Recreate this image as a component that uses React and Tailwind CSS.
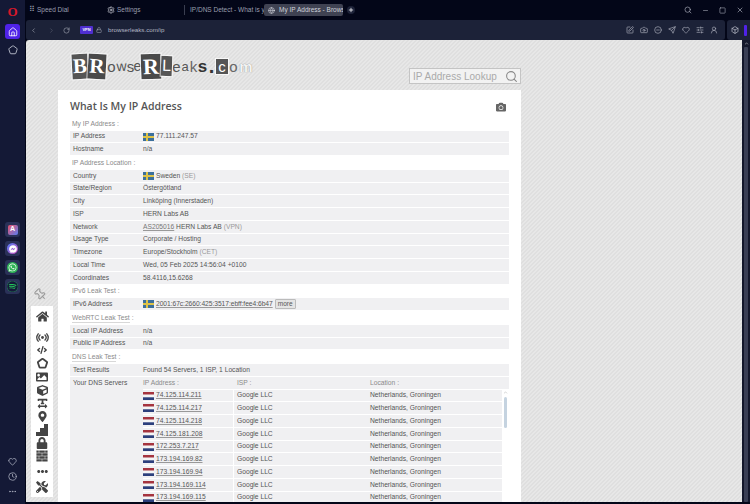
import { ChevronLeft, ChevronRight, ChevronUp, RotateCw, Lock, Search, Minus, Square, X, Plus, Home, Pentagon, Heart, Clock, Ellipsis, Settings, Globe, Camera, SquarePen, CircleMinus, Send, SlidersHorizontal, UserRound, Box, Pin } from 'lucide-react';
import { FaHome, FaCode, FaImage, FaCube, FaTextWidth, FaMapMarkerAlt, FaLock, FaEllipsisH, FaTools, FaWhatsapp, FaSpotify, FaFacebookMessenger, FaCamera } from 'react-icons/fa';
import { GiBrickWall } from 'react-icons/gi';

function SwedenFlag() {
    return (
        <svg width="11" height="8" viewBox="0 0 11 8" className="shrink-0">
            <rect width="11" height="8" fill="#3b6f9c" />
            <rect x="3" width="2" height="8" fill="#dcc248" />
            <rect y="3" width="11" height="2" fill="#dcc248" />
        </svg>
    );
}

function NetherlandsFlag() {
    return (
        <svg width="11" height="8" viewBox="0 0 11 8" className="shrink-0">
            <rect width="11" height="2.7" fill="#a5343f" />
            <rect y="2.7" width="11" height="2.6" fill="#f5f5f5" />
            <rect y="5.3" width="11" height="2.7" fill="#2c3f7c" />
        </svg>
    );
}

function Section({ children, underline }) {
    return (
        <div className="h-[13.75px] flex items-center pl-[2px] text-[#8a8a8a]">
            <span className={underline ? 'border-b border-[#d8d8d8] leading-[8px]' : ''}>{children}</span>
            <span className="ml-[2px]">:</span>
        </div>
    );
}

function Row({ label, children }) {
    return (
        <div className="h-[12.75px] flex items-center bg-[#f0f0f2] border-b border-white">
            <div className="w-[73px] pl-[3px] shrink-0">{label}</div>
            <div className="flex items-center gap-[2px] whitespace-nowrap">{children}</div>
        </div>
    );
}

const dnsServers = ['74.125.114.211', '74.125.114.217', '74.125.114.218', '74.125.181.208', '172.253.7.217', '173.194.169.82', '173.194.169.94', '173.194.169.114', '173.194.169.115'];

function DnsTable() {
    return (
        <div className="flex bg-[#f0f0f2]">
            <div className="w-[73px] shrink-0 pl-[3px] h-[12.75px] flex items-center">Your DNS Servers</div>
            <div className="flex-1">
                <div className="h-[12.75px] flex items-center border-b border-white text-[#8a8a8a]">
                    <div className="w-[94px]">IP Address :</div>
                    <div className="w-[133px]">ISP :</div>
                    <div>Location :</div>
                </div>
                <div className="relative">
                    {dnsServers.map((ip) => (
                        <div key={ip} className="h-[12.75px] flex items-center border-b border-white mr-[7px]">
                            <div className="w-[91px] flex items-center gap-[2px] border-r border-white h-full">
                                <NetherlandsFlag />
                                <span className="underline decoration-[#999]">{ip}</span>
                            </div>
                            <div className="w-[136px] pl-[3px]">Google LLC</div>
                            <div>Netherlands, Groningen</div>
                        </div>
                    ))}
                    <div className="absolute right-0 top-0 w-[7px] h-full bg-white flex flex-col items-center">
                        <ChevronUp size={5} className="text-[#999]" />
                        <div className="mt-[2px] w-[3px] h-[31px] bg-[#c5d3e0] rounded-full" />
                    </div>
                </div>
            </div>
        </div>
    );
}

const logoLetters = [
    ['B', "bg-[#555] text-white font-['Liberation_Serif',serif] font-bold text-[21px] w-[16px] h-[25px] -rotate-3"],
    ['R', "bg-[#4a4a4a] text-white font-['Liberation_Serif',serif] font-bold text-[21px] w-[18px] h-[25px] rotate-3"],
    ['o', 'ml-[1px] text-[#555] text-[15px] w-[9px]'],
    ['w', 'text-[#555] text-[14px] w-[11px] -rotate-3'],
    ['s', 'text-[#555] text-[15px] w-[7px]'],
    ['e', 'text-[#555] text-[14px] w-[7px]'],
    ['R', "bg-[#4a4a4a] text-white font-['Liberation_Serif',serif] font-bold text-[22px] w-[20px] h-[25px] -rotate-2"],
    ['L', 'bg-[#555] text-white text-[16px] w-[11px] h-[20px] rotate-2'],
    ['e', 'text-[#555] text-[15px] w-[9px]'],
    ['a', 'text-[#555] text-[13px] w-[8px]'],
    ['k', 'text-[#666] text-[15px] w-[9px]'],
    ['s', 'text-[#333] text-[17px] w-[9px] font-bold'],
    ['.', 'text-[#333] text-[20px] w-[9px] font-bold'],
    ['c', 'bg-[#555] text-white text-[15px] w-[12px] h-[15px]'],
    ['o', 'text-[#666] text-[15px] w-[11px]'],
    ['m', 'text-[#f4f4f4] text-[15px] w-[14px] font-bold [text-shadow:0_0_1px_#777]'],
];

function Logo() {
    return (
        <div className="flex items-center h-[32px] mt-[10px] ml-[14px] font-['Liberation_Sans',sans-serif]">
            {logoLetters.map(([ch, cls], i) => (
                <span key={i} className={`flex items-center justify-center leading-none shrink-0 ${i < 2 || i === 6 || i === 7 || i === 13 ? 'outline outline-1 outline-white/70' : ''} ${cls}`}>{ch}</span>
            ))}
        </div>
    );
}

function ToolPanel() {
    const cls = 'text-[#444]';
    return (
        <div className="absolute left-[5px] top-[266px] w-[22px] h-[191px] bg-white flex flex-col items-center text-[#444]">
            <FaHome size={13} className={`mt-[4px] ${cls}`} />
            <svg width="13" height="9" viewBox="0 0 13 9" fill="none" stroke="#444" strokeWidth="1.3" strokeLinecap="round" className="mt-[10px]">
                <circle cx="6.5" cy="4.5" r="1.4" fill="#444" stroke="none" />
                <path d="M4 2a3.6 3.6 0 0 0 0 5M9 2a3.6 3.6 0 0 1 0 5M2.2 0.8a6 6 0 0 0 0 7.4M10.8 0.8a6 6 0 0 1 0 7.4" />
            </svg>
            <FaCode size={10} className={`mt-[3px] ${cls}`} />
            <Pentagon size={11} strokeWidth={4} className={`mt-[3px] ${cls}`} />
            <FaImage size={12} className={`mt-[2px] ${cls}`} />
            <FaCube size={11} className={`mt-[2px] ${cls}`} />
            <FaTextWidth size={11} className={`mt-[2px] ${cls}`} />
            <FaMapMarkerAlt size={11} className={`mt-[2px] ${cls}`} />
            <svg width="12" height="12" viewBox="0 0 12 12" className="mt-[2px]" fill="#444">
                <path d="M0 12V8h4V4h4V0h4v12z" />
            </svg>
            <FaLock size={12} className={`mt-[1px] ${cls}`} />
            <GiBrickWall size={12} className={`mt-[1px] ${cls}`} />
            <FaEllipsisH size={11} className={`mt-[4px] ${cls}`} />
            <FaTools size={12} className={`mt-[4px] ${cls}`} />
        </div>
    );
}

function SideApp({ children, className }) {
    return (
        <div className="w-[15px] h-[15px] rounded-[3px] bg-[#2a3158] flex items-center justify-center">
            <div className={`w-[11px] h-[11px] rounded-full flex items-center justify-center ${className}`}>{children}</div>
        </div>
    );
}

export default function App() {
    return (
        <div className="w-[750px] h-[504px] overflow-hidden flex bg-[#030618] font-['Liberation_Sans',sans-serif]">
            {/* Opera sidebar */}
            <div className="w-[25px] h-full bg-[#141936] flex flex-col items-center shrink-0">
                <span className="mt-[4px] h-[16px] flex items-center text-[#d7182a] text-[13px] font-bold font-['Liberation_Serif',serif]">O</span>
                <div className="mt-[4px] w-[15px] h-[15px] rounded-[3px] bg-[#4f22e8] flex items-center justify-center">
                    <Home size={10} className="text-white" />
                </div>
                <Pentagon size={10} className="mt-[6px] text-[#cdd0dc]" />
                <div className="mt-[167px] flex flex-col gap-[4px]">
                    <div className="w-[15px] h-[15px] rounded-[3px] bg-[#2a3158] flex items-center justify-center">
                        <div className="w-[10px] h-[10px] rounded-[2px] bg-[linear-gradient(135deg,#e9536a,#5a7df0)] flex items-center justify-center text-white text-[7px] font-bold">A</div>
                    </div>
                    <SideApp className="bg-[linear-gradient(135deg,#4f7df5,#d04fc0)]"><FaFacebookMessenger size={8} className="text-white" /></SideApp>
                    <SideApp className="bg-[#2fb457]"><FaWhatsapp size={9} className="text-white" /></SideApp>
                    <SideApp className="bg-[#24c25a]"><FaSpotify size={11} className="text-[#15193a]" /></SideApp>
                </div>
                <div className="mt-auto mb-[8px] flex flex-col items-center gap-[6px] text-[#aeb2c2]">
                    <Heart size={9} />
                    <Clock size={9} />
                    <Ellipsis size={9} />
                </div>
            </div>

            <div className="flex-1 min-w-0 flex flex-col pl-[1px]">
                {/* Tab strip */}
                <div className="h-[20px] flex items-center text-[6.5px] text-[#9a9eae] shrink-0">
                    <div className="w-[78px] pl-[3px] flex items-center gap-[2px]">
                        <span className="text-[8px] leading-none">⠿</span>
                        <span>Speed Dial</span>
                    </div>
                    <div className="w-[80px] pl-[3px] flex items-center gap-[2px]">
                        <Settings size={8} className="text-[#d5d7e0]" />
                        <span>Settings</span>
                    </div>
                    <div className="w-[80px] h-[10px] border-l border-[#3a3e50] pl-[3px] flex items-center gap-[2px] overflow-hidden whitespace-nowrap">
                        <Globe size={6} />
                        <span>IP/DNS Detect - What is y</span>
                    </div>
                    <div className="w-[79px] h-[12px] rounded-[2px] bg-[#3f4252] pl-[4px] flex items-center gap-[4px] overflow-hidden whitespace-nowrap text-[#d0d2da]">
                        <Globe size={7} className="shrink-0" />
                        <span>My IP Address - Browserl</span>
                    </div>
                    <div className="ml-[4px] w-[8px] h-[8px] rounded-full bg-[#1d2238] flex items-center justify-center">
                        <Plus size={6} strokeWidth={3} className="text-white" />
                    </div>
                    <div className="ml-auto flex items-center gap-[10px] pr-[6px] text-[#a9acb9]">
                        <Search size={8} />
                        <Minus size={7} />
                        <Square size={7} />
                        <X size={8} />
                    </div>
                </div>

                {/* Address bar */}
                <div className="h-[20px] flex gap-[2px] shrink-0">
                    <div className="w-[699px] bg-[#1c2238] rounded-[3px] flex items-center text-[#a9acb9]">
                        <ChevronLeft size={7} className="ml-[4px]" />
                        <ChevronRight size={7} className="ml-[11px] text-[#5a5e70]" />
                        <RotateCw size={7} className="ml-[8px]" />
                        <span className="ml-[10px] w-[13px] h-[8px] rounded-[1px] bg-[#4f2fd0] text-white text-[4px] font-bold flex items-center justify-center">VPN</span>
                        <Lock size={6} className="ml-[3px]" />
                        <span className="ml-[6px] text-[6.2px] text-[#b4b7c4]">browserleaks.com/ip</span>
                        <div className="ml-auto mr-[7px] flex items-center gap-[6px]">
                            <SquarePen size={8} />
                            <Camera size={8} />
                            <CircleMinus size={8} />
                            <Send size={8} />
                            <Heart size={8} />
                            <SlidersHorizontal size={8} />
                            <UserRound size={8} />
                        </div>
                    </div>
                    <div className="flex-1 bg-[#1c2238] rounded-l-[3px] flex items-center pl-[4px] gap-[5px]">
                        <Box size={8} className="text-[#c5c8d4]" />
                        <div className="w-[3px] h-[11px] bg-[#4f22e8] rounded-[1px]" />
                    </div>
                </div>

                {/* Page */}
                <div className="relative flex-1 min-h-0 mb-[2px] flex rounded-tl-[3px] overflow-hidden">
                    <div className="flex-1 min-w-0 overflow-hidden bg-[repeating-linear-gradient(135deg,#e7e7e7_0,#e7e7e7_1.414px,#dfdfdf_1.414px,#dfdfdf_2.828px)]">
                        <div className="ml-[32px] w-[463px]">
                            <div className="h-[50px] flex justify-between">
                                <Logo />
                                <div className="self-end mb-[6px] w-[112px] h-[16px] border border-[#c4c4c4] bg-[#f2f2f2] flex items-center justify-between px-[3px] text-[10px] text-[#aaa]">
                                    <span>IP Address Lookup</span>
                                    <Search size={13} strokeWidth={2} className="text-[#888] -mr-[1px]" />
                                </div>
                            </div>
                            <div className="bg-white px-[12px] text-[6.7px] text-[#555]">
                                <div className="h-[26.9px] pt-[9px] flex items-start justify-between font-['Open_Sans',sans-serif]">
                                    <h1 className="text-[10.5px] leading-[14px] font-semibold text-[#555]">What Is My IP Address</h1>
                                    <FaCamera size={10} className="mt-[3px] mr-[3px] text-[#666]" />
                                </div>
                                <Section>My IP Address</Section>
                                <Row label="IP Address"><SwedenFlag /><span>77.111.247.57</span></Row>
                                <Row label="Hostname">n/a</Row>
                                <Section>IP Address Location</Section>
                                <Row label="Country"><SwedenFlag /><span>Sweden <span className="text-[#999]">(SE)</span></span></Row>
                                <Row label="State/Region">Östergötland</Row>
                                <Row label="City">Linköping (Innerstaden)</Row>
                                <Row label="ISP">HERN Labs AB</Row>
                                <Row label="Network"><span><span className="underline decoration-[#999] text-[#777]">AS205016</span> HERN Labs AB <span className="text-[#999]">(VPN)</span></span></Row>
                                <Row label="Usage Type">Corporate / Hosting</Row>
                                <Row label="Timezone"><span>Europe/Stockholm <span className="text-[#999]">(CET)</span></span></Row>
                                <Row label="Local Time">Wed, 05 Feb 2025 14:56:04 +0100</Row>
                                <Row label="Coordinates">58.4116,15.6268</Row>
                                <Section>IPv6 Leak Test</Section>
                                <Row label="IPv6 Address">
                                    <SwedenFlag />
                                    <span className="underline decoration-[#999] tracking-[-0.05px]">2001:67c:2660:425:3517:ebff:fee4:6b47</span>
                                    <span className="h-[10px] w-[21px] bg-[#e4e4e4] border border-[#bbb] rounded-[1px] flex items-center justify-center text-[6.5px]">more</span>
                                </Row>
                                <Section underline>WebRTC Leak Test</Section>
                                <Row label="Local IP Address">n/a</Row>
                                <Row label="Public IP Address">n/a</Row>
                                <Section underline>DNS Leak Test</Section>
                                <Row label="Test Results">Found 54 Servers, 1 ISP, 1 Location</Row>
                                <DnsTable />
                            </div>
                        </div>
                    </div>

                    {/* Scrollbar */}
                    <div className="w-[8px] bg-[#14182c] flex flex-col items-center pt-[1px] shrink-0">
                        <ChevronLeft size={5} className="rotate-90 text-white" />
                        <div className="mt-[1px] w-[4px] flex-1 bg-[#3a3f55] rounded-[1px]" />
                    </div>

                    {/* Floating tool panel */}
                    <Pin size={13} className="absolute left-[8px] top-[248px] rotate-[-45deg] text-[#999]" />
                    <ToolPanel />
                </div>
            </div>
        </div>
    );
}
